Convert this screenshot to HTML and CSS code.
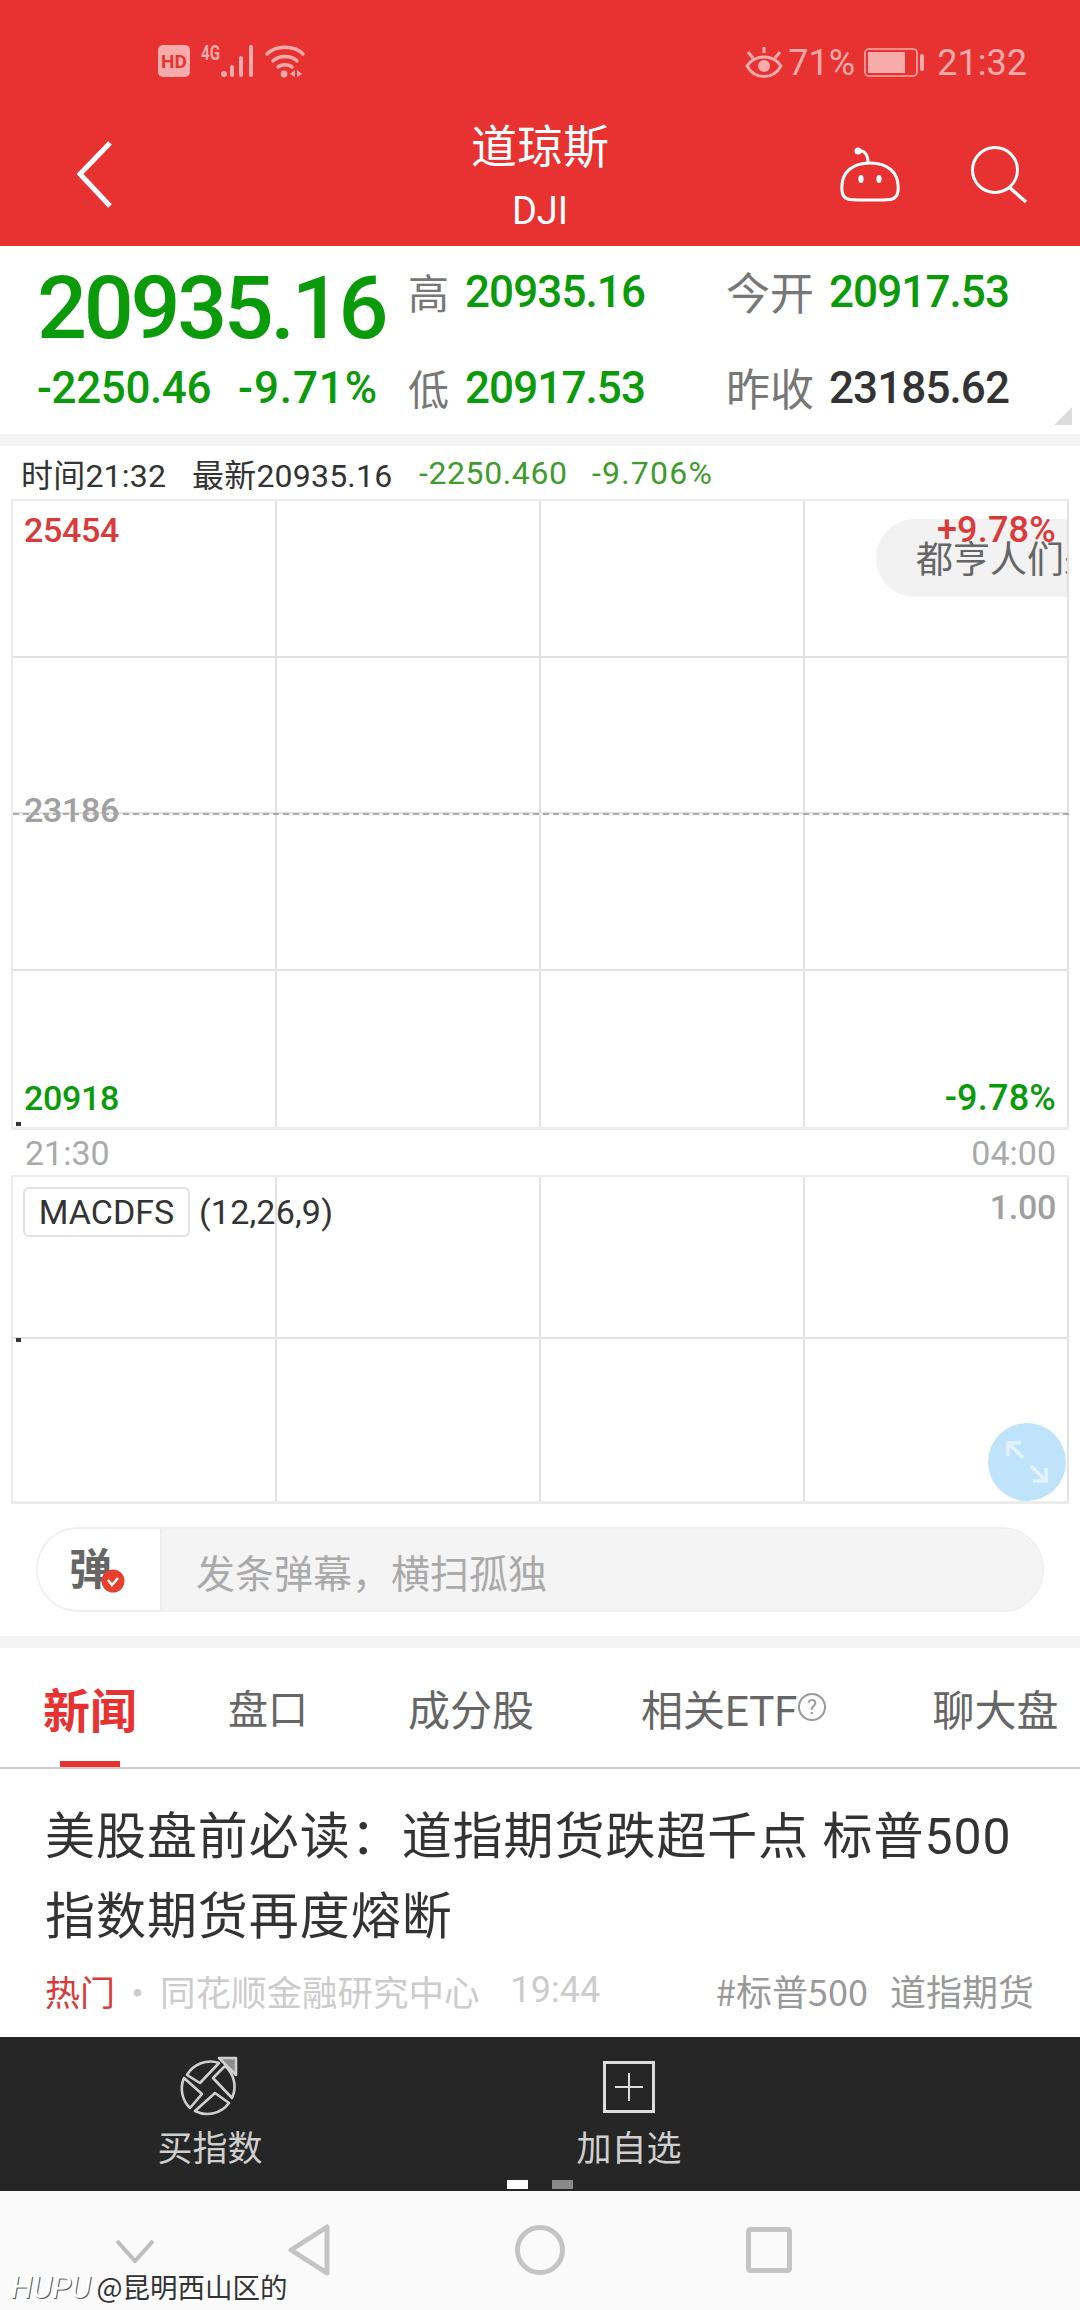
FILE: index.html
```html
<!DOCTYPE html>
<html lang="zh">
<head>
<meta charset="utf-8">
<title>道琼斯</title>
<link rel="stylesheet" href="styles.css">
</head>
<body>
<div class="screen">
  <header class="header">
    <div class="status">
      <div class="status-left">
        <svg class="ic-hd" width="32" height="32" viewBox="0 0 32 32"><rect width="32" height="32" rx="5" fill="#f7abab"/><text x="16" y="23" text-anchor="middle" class="hd-text">HD</text></svg>
        <svg class="ic-signal" width="56" height="34" viewBox="0 0 56 34">
          <text x="0" y="16" class="g-text" textLength="19" lengthAdjust="spacingAndGlyphs">4G</text>
          <g fill="#f7abab"><circle cx="23" cy="30" r="3"/><rect x="29" y="21" width="4" height="12" rx="2"/><rect x="38" y="12" width="4" height="21" rx="2"/><rect x="48" y="1" width="4" height="32" rx="2"/></g>
        </svg>
        <svg class="ic-wifi" width="40" height="34" viewBox="0 0 40 34">
          <g fill="none" stroke="#f7abab" stroke-width="3.4" stroke-linecap="round"><path d="M2 10 C11 1 29 1 38 10"/><path d="M8 17 C14 11 26 11 32 17"/><path d="M13 23 C16 20 24 20 27 23"/></g>
          <circle cx="19" cy="30" r="3.4" fill="#f7abab"/><path d="M30 26 V33 L25 30Z M32 26 V33 L37 30Z" fill="#f7abab"/>
        </svg>
      </div>
      <div class="status-right">
        <svg width="38" height="32" viewBox="0 0 38 32">
          <g fill="none" stroke="#f7abab" stroke-width="3"><path d="M2 19 C10 7 28 7 36 19 C28 33 10 33 2 19Z"/><path d="M3 5 L8 11 M19 0 V6 M35 5 L30 11"/></g>
          <circle cx="19" cy="19" r="6" fill="#f7abab"/>
        </svg>
        <span class="st-pct">71%</span>
        <svg class="ic-batt" width="61" height="30" viewBox="0 0 61 30">
          <rect x="1" y="1" width="52" height="27" rx="4" fill="none" stroke="#f7abab" stroke-width="1.6"/><rect x="4" y="4" width="37" height="21" fill="#f7abab"/><rect x="56" y="6" width="4" height="17" rx="2" fill="#f7abab"/>
        </svg>
        <span class="st-time">21:32</span>
      </div>
    </div>
    <div class="titlebar">
      <svg class="ic-back" width="40" height="70" viewBox="0 0 40 70"><path d="M35 4 L5 35 L35 67" fill="none" stroke="#fff" stroke-width="5"/></svg>
      <div class="title">
        <div class="title-cn">道琼斯</div>
        <div class="title-en">DJI</div>
      </div>
      <svg class="ic-robot" width="64" height="60" viewBox="2 0 64 60">
        <g fill="none" stroke="#fff" stroke-width="3"><path d="M4 44 C2 24 16 16 32 16 C48 16 62 24 60 44 C59 54 52 53 32 53 C12 53 5 54 4 44Z"/><path d="M20 4 C27 3 30 8 30 16"/></g>
        <circle cx="20" cy="4" r="3.5" fill="#fff"/><ellipse cx="23" cy="32" rx="2.6" ry="4" fill="#fff"/><ellipse cx="41" cy="32" rx="2.6" ry="4" fill="#fff"/>
      </svg>
      <svg class="ic-search" width="60" height="60" viewBox="0 0 60 60"><circle cx="26" cy="25" r="22.5" fill="none" stroke="#fff" stroke-width="3"/><path d="M41 43 L57 57" stroke="#fff" stroke-width="3.4"/></svg>
    </div>
  </header>

  <section class="quote">
    <div class="price">20935.16</div>
    <div class="stat"><span class="k k1">高</span><span class="v green">20935.16</span></div>
    <div class="stat"><span class="k k2">今开</span><span class="v green">20917.53</span></div>
    <div class="change"><span>-2250.46</span><span class="change-pct">-9.71%</span></div>
    <div class="stat"><span class="k k1">低</span><span class="v green">20917.53</span></div>
    <div class="stat"><span class="k k2">昨收</span><span class="v dark">23185.62</span></div>
    <svg class="corner" width="18" height="18" viewBox="0 0 18 18"><path d="M18 0 V18 H0Z" fill="#dcdcdc"/></svg>
  </section>

  <div class="band band-a"></div>

  <section class="chart-wrap">
    <div class="info">
      <span class="i-a">时间21:32</span><span class="i-b">最新20935.16</span><span class="i-c">-2250.460</span><span class="i-d">-9.706%</span>
    </div>
    <div class="chart chart-main">
      <div class="cell"></div><div class="cell"></div><div class="cell"></div><div class="cell"></div>
      <div class="cell"></div><div class="cell"></div><div class="cell"></div><div class="cell"></div>
      <div class="cell"></div><div class="cell"></div><div class="cell"></div><div class="cell"></div>
      <div class="cell"></div><div class="cell"></div><div class="cell"></div><div class="cell"></div>
      <div class="toast">都亨人们来</div>
      <span class="lbl red l-tl">25454</span>
      <span class="lbl lbl-pct red l-tr">+9.78%</span>
      <span class="lbl gray l-ml">23186</span>
      <div class="dash"></div>
      <span class="lbl green l-bl">20918</span>
      <span class="lbl lbl-pct green l-br">-9.78%</span>
      <i class="tick tick-a"></i>
    </div>
    <div class="times"><span>21:30</span><span>04:00</span></div>
    <div class="chart chart-sub">
      <div class="cell"></div><div class="cell"></div><div class="cell"></div><div class="cell"></div>
      <div class="cell"></div><div class="cell"></div><div class="cell"></div><div class="cell"></div>
      <div class="macd"><span class="macd-box">MACDFS</span><span class="macd-p">(12,26,9)</span></div>
      <span class="lbl gray l-one">1.00</span>
      <i class="tick tick-b"></i>
      <div class="expand">
        <svg width="44" height="44" viewBox="0 0 44 44"><g fill="none" stroke="#e2f3fe" stroke-width="3.6"><path d="M3 16 V3 H16 M3 3 L18 18"/><path d="M41 28 V41 H28 M41 41 L26 26"/></g></svg>
      </div>
    </div>
    <div class="danmu">
      <div class="danmu-l"><span class="dan">弹</span>
        <svg class="dan-check" width="24" height="24" viewBox="0 0 24 24"><circle cx="12" cy="12" r="11.5" fill="#e8402e"/><path d="M7 11 L11 16 L17 9" fill="none" stroke="#fff" stroke-width="2.4"/></svg>
      </div>
      <div class="danmu-r">发条弹幕，横扫孤独</div>
    </div>
  </section>

  <div class="band band-b"></div>

  <nav class="tabs">
    <span class="tab tab-news">新闻</span>
    <span class="tab tab-pk">盘口</span>
    <span class="tab tab-cf">成分股</span>
    <span class="tab tab-etf">相关ETF<svg class="q" width="30" height="30" viewBox="0 0 30 30"><circle cx="15" cy="15" r="13" fill="none" stroke="#999" stroke-width="2"/><text x="15" y="22" text-anchor="middle" class="q-text">?</text></svg></span>
    <span class="tab tab-chat">聊大盘</span>
  </nav>

  <article class="news">
    <h2 class="news-title">美股盘前必读：道指期货跌超千点 标普500<br>指数期货再度熔断</h2>
    <div class="meta">
      <span class="hot">热门</span><span class="dot">·</span><span class="src">同花顺金融研究中心</span><span class="mt">19:44</span>
      <span class="tags"><span>#标普500</span><span>道指期货</span></span>
    </div>
  </article>

  <div class="actions">
    <div class="act act-buy">
      <svg class="buy-ic" width="80" height="66" viewBox="0 0 80 66">
        <g fill="none" stroke="#cfcfcf" stroke-width="2.6" stroke-linejoin="round">
          <path d="M20 25 A27 27 0 0 1 52 13 L33 33 Z"/>
          <path d="M46 28 L58 16 A27 27 0 0 1 65 48 Z"/>
          <path d="M17 28 L35 44 L23 58 A27 27 0 0 1 17 28 Z"/>
          <path d="M48 43 L62 53 A27 27 0 0 1 28 61 Z"/>
          <path d="M52 8 H69 V25 Z" fill="#8c8c8c"/>
        </g>
      </svg>
      <span>买指数</span>
    </div>
    <div class="act act-add">
      <svg width="52" height="52" viewBox="0 0 52 52"><rect x="1.5" y="1.5" width="49" height="49" fill="none" stroke="#dcdcdc" stroke-width="3"/><path d="M26 12 V40 M12 26 H40" stroke="#dcdcdc" stroke-width="2"/></svg>
      <span>加自选</span>
    </div>
    <div class="act-more">
      <i class="red-dot"></i>
      <div class="dots"><i></i><i></i><i></i></div>
    </div>
    <div class="pager"><i class="on"></i><i></i></div>
  </div>

  <div class="navbar">
    <svg class="n-down" width="40" height="24" viewBox="0 0 40 24"><path d="M2 2 L20 22 L38 2" fill="none" stroke="#bdbdbd" stroke-width="4"/></svg>
    <svg class="n-back" width="46" height="52" viewBox="0 0 46 52"><path d="M41 3 V49 L5 26Z" fill="none" stroke="#c4c4c4" stroke-width="5" stroke-linejoin="round"/></svg>
    <svg class="n-home" width="50" height="50" viewBox="0 0 50 50"><circle cx="25" cy="25" r="22.5" fill="none" stroke="#c4c4c4" stroke-width="5"/></svg>
    <svg class="n-rec" width="46" height="46" viewBox="0 0 46 46"><rect x="2.5" y="2.5" width="41" height="41" rx="2" fill="none" stroke="#c4c4c4" stroke-width="5"/></svg>
  </div>

  <div class="watermark"><em>HUPU</em> @昆明西山区的</div>
</div>
</body>
</html>
```
FILE: styles.css
```css
* { box-sizing: border-box; margin: 0; padding: 0; }
html, body { width: 1080px; height: 2310px; overflow: hidden; background: #fff; }
body { font-family: Roboto, "Noto Sans CJK SC", sans-serif; color: #333; }
.screen { position: relative; width: 1080px; height: 2310px; display: flex; flex-direction: column; overflow: hidden; }
svg { display: block; flex: none; }
.green { color: #0a9a0a; }
.red { color: #d93a3a; }
.gray { color: #a0a0a0; }
.dark { color: #333; }

/* header */
.header { height: 246px; background: #e83232; display: flex; flex-direction: column; }
.status { height: 109px; padding: 45px 53px 0 158px; display: flex; justify-content: space-between; align-items: flex-start; color: #f7abab; }
.status-left { display: flex; align-items: flex-start; gap: 11px; }
.ic-signal { margin-top: -1px; }
.ic-wifi { margin-left: -3px; margin-top: -1px; }
.hd-text { font: 700 19px Roboto, sans-serif; fill: #e83232; }
.g-text { font: 700 20px Roboto, sans-serif; fill: #f7abab; }
.status-right { display: flex; align-items: center; height: 36px; }
.st-pct { font-size: 36px; margin-left: 5px; line-height: 36px; width: 76px; }
.st-time { font-size: 36px; margin-left: 12px; line-height: 36px; }
.titlebar { flex: 1; display: grid; grid-template-columns: 115px 725px 64px 64px 60px; align-items: start; padding-left: 0; }
.ic-back { margin-top: 30px; margin-left: 75px; }
.title { padding-left: 125px; text-align: center; color: #fff; }
.title-cn { font-family: "Noto Sans CJK SC", sans-serif; font-size: 46px; line-height: 66px; margin-top: 1px; }
.title-en { font-size: 38px; line-height: 50px; margin-top: 10px; }
.ic-robot { margin-top: 38px; }
.ic-search { grid-column: 5; margin-left: 1px; margin-top: 36px; }

/* quote */
.quote { position: relative; height: 188px; display: grid; grid-template-columns: 371px 318px 1fr; grid-template-rows: 92px 100px; padding-left: 37px; align-items: center; }
.price { font-size: 88px; font-weight: 500; color: #0a9a0a; letter-spacing: -3.3px; line-height: 100px; margin-top: 31px; }
.stat { display: flex; align-items: center; }
.k { font-family: "Noto Sans CJK SC", sans-serif; font-size: 41px; color: #777; margin-top: -3px; }
.k1 { width: 57px; }
.k2 { width: 103px; font-size: 44px; }
.v { font-size: 44px; font-weight: 500; letter-spacing: -.9px; }
.change { display: flex; gap: 27px; font-size: 44px; color: #0a9a0a; letter-spacing: -.4px; font-weight: 500; }
.change-pct { letter-spacing: .9px; }
.corner { position: absolute; right: 8px; bottom: 9px; }
.band { background: #f4f4f4; }
.band-a { height: 12px; }
.band-b { height: 12px; }

/* chart */
.chart-wrap { height: 1190px; padding: 0 0 0 11px; position: relative; }
.info { height: 53px; display: flex; align-items: center; padding-left: 10px; font-size: 32px; letter-spacing: .2px; font-family: Roboto, "Noto Sans CJK SC", sans-serif; }
.i-a, .i-b { color: #333; }
.i-a { width: 171px; }
.i-b { width: 227px; }
.i-c { color: #3f9c2c; width: 173px; letter-spacing: .6px; }
.i-d { color: #3f9c2c; letter-spacing: 1.2px; }
.chart { position: relative; display: grid; grid-template-columns: repeat(4, 264px); border-top: 2px solid #ececec; border-left: 2px solid #ececec; border-bottom: 3px solid #ececec; overflow: hidden; }
.chart-main { width: 1058px; height: 631px; grid-template-rows: repeat(4, 1fr); }
.chart-sub { width: 1058px; height: 329px; grid-template-rows: repeat(2, 1fr); }
.cell { border-right: 2px solid #e2e2e2; border-bottom: 2px solid #e2e2e2; }
.chart-main .cell:nth-child(n+13), .chart-sub .cell:nth-child(n+5) { border-bottom: 0; }
.lbl { position: absolute; font-size: 34px; line-height: 40px; font-weight: 500; letter-spacing: -.3px; }
.lbl-pct { font-size: 36px; letter-spacing: .2px; }
.l-tl { left: 11px; top: 9px; }
.l-tr { right: 13px; top: 9px; }
.l-ml { left: 11px; top: 289px; }
.l-bl { left: 11px; top: 577px; }
.l-br { right: 13px; top: 577px; }
.l-one { right: 13px; top: 10px; }
.dash { position: absolute; left: 0; right: 0; top: 312px; border-top: 2px dashed #aaa; }
.toast { position: absolute; left: 863px; top: 18px; width: 191px; height: 78px; background: #f2f2f2; border-radius: 39px 0 0 39px; padding-left: 40px; line-height: 76px; font-size: 37px; color: #666; font-family: "Noto Sans CJK SC", sans-serif; white-space: nowrap; overflow: hidden; }
.tick { position: absolute; left: 3px; width: 5px; height: 4px; background: #333; }
.tick-a { bottom: 1px; }
.tick-b { top: 161px; }
.times { height: 45px; display: flex; justify-content: space-between; align-items: center; padding: 0 13px 0 14px; width: 1058px; font-size: 34px; color: #aaa; }
.macd { position: absolute; left: 10px; top: 10px; display: flex; align-items: center; gap: 9px; }
.macd-box { width: 167px; height: 50px; border: 2px solid #e2e2e2; border-radius: 6px; background: #fff; text-align: center; font-size: 34px; line-height: 46px; }
.macd-p { font-size: 34px; letter-spacing: .2px; }
.expand { position: absolute; right: 3px; bottom: 0; width: 78px; height: 78px; border-radius: 50%; background: #bfe3fb; display: flex; align-items: center; justify-content: center; }
.danmu { margin: 23px 0 0 25px; width: 1008px; height: 85px; border: 2px solid #f0f0f0; border-radius: 42px; display: flex; overflow: hidden; }
.danmu-l { position: relative; width: 124px; border-right: 2px solid #eee; background: #fff; }
.dan { position: absolute; left: 31px; top: 9px; font-size: 43px; line-height: 56px; font-weight: 700; color: #666; font-family: "Noto Sans CJK SC", sans-serif; }
.dan-check { position: absolute; left: 63px; top: 40px; }
.danmu-r { flex: 1; background: #f4f4f4; padding-left: 34px; font-size: 39px; line-height: 84px; color: #aaa; font-family: "Noto Sans CJK SC", sans-serif; }

/* tabs */
.tabs { position: relative; height: 121px; border-bottom: 2px solid #ccc; display: flex; align-items: center; font-size: 42px; color: #666; font-family: "Noto Sans CJK SC", sans-serif; padding-bottom: 1px; }
.tab { display: flex; align-items: center; flex: none; white-space: nowrap; }
.tab-news { margin-left: 43px; font-size: 47px; font-weight: 700; color: #e83232; }
.tab-news::after { content: ""; position: absolute; left: 60px; bottom: 0; width: 60px; height: 6px; background: #e83232; }
.tab-pk { margin-left: 91px; font-size: 40px; }
.tab-cf { margin-left: 100px; }
.tab-etf { margin-left: 107px; font-family: Roboto, "Noto Sans CJK SC", sans-serif; }
.tab-chat { margin-left: 106px; }
.q { margin-left: -1px; }
.q-text { font: 400 21px Roboto, sans-serif; fill: #999; }

/* news */
.news { height: 268px; padding: 28px 46px 0 45px; font-family: "Noto Sans CJK SC", sans-serif; }
.news-title { font-size: 50px; font-weight: 400; line-height: 80px; color: #333; letter-spacing: .95px; white-space: nowrap; font-family: Roboto, "Noto Sans CJK SC", sans-serif; }
.meta { display: flex; align-items: center; margin-top: 8px; height: 50px; font-size: 35px; }
.hot { color: #d93a3a; }
.dot { color: #ccc; width: 45px; text-align: center; }
.src { color: #ccc; font-size: 35.5px; }
.mt { color: #ccc; margin-left: 31px; font-family: Roboto, sans-serif; font-size: 36px; }
.tags { margin-left: auto; display: flex; gap: 22px; color: #999; font-size: 36px; }

/* actions */
.actions { position: relative; height: 154px; background: #262626; display: flex; color: #cfcfcf; }
.act { display: flex; flex-direction: column; align-items: center; font-size: 35px; }
.act-buy { width: 106px; margin-left: 157px; padding-top: 13px; }
.buy-ic { margin-left: -6px; }
.act-buy span { margin-top: 9px; line-height: 50px; }
.act-add { width: 106px; margin-left: 313px; padding-top: 24px; }
.act-add span { margin-top: 12px; line-height: 50px; }
.act-more { position: relative; flex: 1; }
.red-dot { position: absolute; left: 479px; top: 25px; width: 18px; height: 18px; border-radius: 50%; background: #e83232; }
.dots { position: absolute; left: 412px; top: 69px; display: flex; gap: 12px; }
.dots i { width: 12px; height: 12px; border-radius: 50%; background: #aaa; display: block; }
.pager { position: absolute; left: 507px; top: 143px; display: flex; gap: 24px; }
.pager i { width: 21px; height: 9px; background: #8a8a8a; display: block; }
.pager i.on { background: #fff; }

/* navbar */
.navbar { flex: 1; background: #fafafa; display: flex; align-items: flex-start; }
.n-down { margin: 48px 0 0 115px; }
.n-back { margin: 33px 0 0 131px; }
.n-home { margin: 34px 0 0 183px; }
.n-rec { margin: 36px 0 0 181px; }
.watermark { position: absolute; left: 11px; bottom: 5px; font-size: 27.5px; line-height: 34px; color: #333; font-family: "Noto Sans CJK SC", sans-serif; text-shadow: 1px 1px 0 #fff; white-space: nowrap; }
.watermark em { font-family: Roboto, sans-serif; font-size: 31px; font-style: italic; color: #fff; text-shadow: 1px 1px 0 #555; }
```
